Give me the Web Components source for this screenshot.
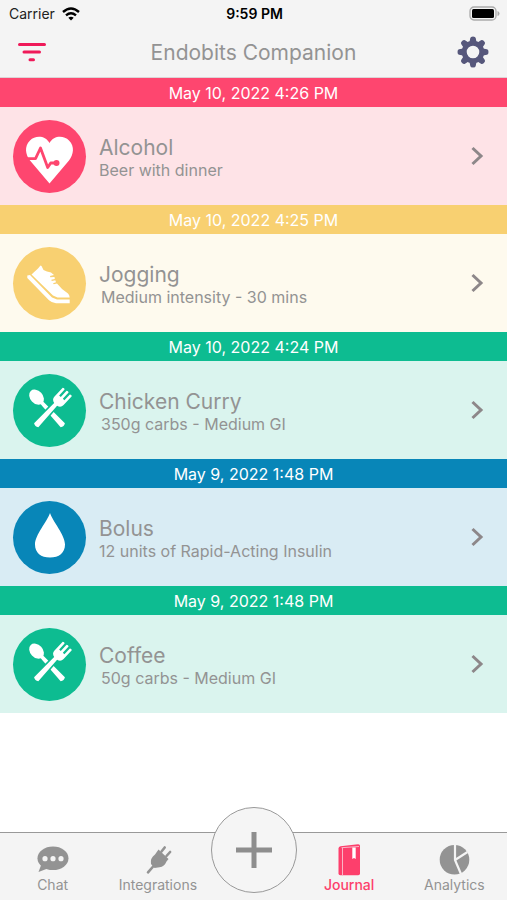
<!DOCTYPE html>
<html lang="en">
<head>
<meta charset="utf-8">
<meta name="viewport" content="width=device-width, initial-scale=1">
<title>Endobits Companion</title>
<style>
html, body { margin: 0; height: 100%; }
body { font-family: Inter, "Liberation Sans", sans-serif; color: #939393; background: #fff; }
</style>
</head>
<body>
<companion-app></companion-app>
<script>
const define = (name, html, setup) => {
  const template = document.createElement('template');
  template.innerHTML = html;
  customElements.define(name, class extends HTMLElement {
    constructor() {
      super();
      this.attachShadow({ mode: 'open' }).append(template.content.cloneNode(true));
    }
    connectedCallback() { if (setup) setup(this, this.shadowRoot); }
  });
};

const gearTeeth = [0, 45, 90, 135, 180, 225, 270, 315]
  .map(a => `<path d="M12.200 7.500 13.300 2Q13.500 .5 16 .5T18.700 2L19.800 7.500z" transform="rotate(${a} 16 16)"/>`).join('');

const cutlery = `
  <g transform="rotate(-43 36.500 37)" fill="#fff">
    <ellipse cx="36.500" cy="18" rx="6.300" ry="8.500"/>
    <path d="M34.800 24h3.400l1.200 32.500q-2.900 2-5.800 0z"/>
  </g>
  <g transform="rotate(43 36.500 37)">
    <path d="M34 26h5l1 31h-7z" fill="var(--tone)" stroke="var(--tone)" stroke-width="2"/>
    <path fill="#fff" d="M30.300 11q1.300-1.300 2.600 0v8h2.200v-8.500q1.400-1.300 2.800 0V19h2.200v-8q1.300-1.300 2.600 0v12q0 4-4.200 5l.9 28.500q-2.900 2-5.800 0L34.500 28q-4.200-1-4.200-5z"/>
  </g>`;

const entryIcons = {
  heart: `<path fill="#fff" d="M36.500 23C32 15 22 15.500 17 20.500c-6 6-4.500 14 0 20L36.500 63.500 56 40.500c4.500-6 6-14 0-20-5-5-15-5.500-19.500 2.500z"/>
    <path d="M12 38.700h10.500L27.500 28l7.200 19.500 3-4.500h5" fill="none" stroke="var(--tone)" stroke-width="2.800" stroke-linejoin="round"/>
    <circle cx="43.500" cy="43" r="3" fill="var(--tone)"/>`,
  shoe: `<g fill="#fff"><path d="M18.500 27.500 25 21.500l2.500-3 1 .5 2 4 3.500 1.500 4 1 3 2.500-4 1 .3 1.200 4.200-.3.300 2-3.500.8.500 1.200 3.500-.6.700 2-3 1 .8 1 3.200-.8Q49 43 55 46.500q1.500 1.500 1.700 4H44.500L40 48.500z"/>
    <path d="M14.300 28.500 17 28l22 22.500 5 2h12.700v3.700H43q-4-.2-7-3L14.300 31z"/></g>`,
  cutlery,
  drop: `<path fill="#fff" d="M37 12c-2.500 8-15 22-15 31.500C22 52 28 56.500 37 56.500S52 52 52 43.500C52 34 39.500 20 37 12z"/>`
};

const tabIcons = {
  chat: `<ellipse cx="16" cy="14.300" rx="15.500" ry="11.800"/><path d="M4.500 20 1.500 28 12 24z"/>
    <g fill="#f4f4f4"><circle cx="8" cy="14.700" r="2.600"/><circle cx="16" cy="14.700" r="2.600"/><circle cx="24" cy="14.700" r="2.600"/></g>`,
  plug: `<path d="M16.500 5.500 26.500 15 24.500 17.500q-2 5-7 5.800l-5 .7L9 20Q8 14 13 10.500z"/>
    <path d="M12 21.500 6 28.300M19.500 7.500 22.700 3.500M24.500 12l3.600-4" fill="none" stroke="currentColor" stroke-width="2.600" stroke-linecap="round"/>`,
  book: `<path d="M5.500 4.500Q5.500 2.500 7.500 2.200L25 .3q2-.1 2 1.500V29.500q0 1.800-1.800 1.800H7.300q-1.800 0-1.800-1.800z"/>
    <path d="M9.500 4V31.300M8.500 3.700 26 2.500" stroke="#f9b5c6" fill="none"/><path d="M19.300 3.500h3.400V15l-1.700-1-1.700 1z" fill="#fff"/>`,
  pie: `<circle cx="16.500" cy="15.700" r="14.800"/><path d="M17 0v16L23 30M17 16l12.500-8" fill="none" stroke="#f4f4f4" stroke-width="2.200"/>`
};

define('status-bar', `
<style>
  :host { display: grid; grid-template-columns: 1fr auto 1fr; align-items: center; height: 27px; padding: 0 7px 0 9px; color: #222; font-size: 14px; }
  .carrier { display: flex; align-items: center; gap: 7px; }
  time { font-size: 14px; font-weight: 600; color: #000; }
  svg { display: block; }
  .battery { justify-self: end; }
</style>
<div class="carrier"><span>Carrier</span>
  <svg width="18" height="14" viewBox="0 0 18 14" fill="none" stroke="#000" stroke-width="2.400" aria-label="Wi-Fi"><path d="M1 5Q9-2 17 5"/><path d="M4 8.300Q9 4 14 8.300"/><path d="M9 13.500 6.300 10.700Q9 8.700 11.700 10.700z" fill="#000" stroke="none"/></svg>
</div>
<time>9:59 PM</time>
<svg class="battery" width="31" height="15" viewBox="0 0 31 15" aria-label="Battery full"><rect x="1" y="1" width="26" height="13" rx="4" fill="#f4f4f4" stroke="#aaa" stroke-width="1.300"/><rect x="3" y="3" width="22" height="9" rx="1.500"/><path d="M28.500 5q2 .5 2 2.500t-2 2.500z" fill="#aaa"/></svg>`);

define('app-header', `
<style>
  :host { display: grid; grid-template-columns: 1fr auto 1fr; align-items: center; height: 50px; padding: 0 18px; border-bottom: 1px solid #dcd3d5; }
  h1 { margin: 0; padding-top: 2px; font-size: 21px; line-height: 28px; font-weight: 400; }
  button { border: 0; padding: 0; background: none; justify-self: start; }
  button:last-child { justify-self: end; }
  svg { display: block; }
</style>
<button aria-label="Filter"><svg width="28" height="32" viewBox="0 0 28 32" stroke="#ef1a59" stroke-width="3" stroke-linecap="round"><path d="M1.500 8.500h25M6 16h15.500M12 23.800h3.500"/></svg></button>
<h1><slot></slot></h1>
<button aria-label="Settings"><svg width="32" height="32" viewBox="0 0 32 32" fill="#56577b"><circle cx="16" cy="16" r="8.800" fill="none" stroke="#56577b" stroke-width="5"/>${gearTeeth}</svg></button>`);

define('journal-entry', `
<style>
  :host { display: block; }
  time { display: block; padding-top: 2px; background: var(--tone); color: #fff; text-align: center; font-size: 16px; line-height: 27px; }
  a { display: flex; align-items: center; gap: 13px; height: 98px; padding: 0 23px 0 13px; background: var(--tint); color: inherit; text-decoration: none; }
  .icon { flex: none; width: 73px; height: 73px; border-radius: 50%; background: var(--tone); }
  .icon svg { display: block; width: 100%; height: 100%; }
  .text { flex: 1; min-width: 0; padding-top: 4px; }
  h2 { margin: 0; font-size: 21px; line-height: 24px; font-weight: 400; }
  p { margin: 0; font-size: 16px; line-height: 20px; }
  :host([detailed]) p { padding-left: 2px; }
  .chevron { flex: none; }
</style>
<time></time>
<a href="#entry"><span class="icon"></span>
<div class="text"><h2><slot name="title"></slot></h2><p><slot></slot></p></div>
<svg class="chevron" width="14" height="20" viewBox="0 0 14 20" fill="none" stroke="#8d8789" stroke-width="3"><path d="M2.500 2 11 10l-8.500 8"/></svg></a>`,
(el, root) => {
  root.querySelector('time').textContent = el.getAttribute('when');
  root.querySelector('.icon').innerHTML = `<svg viewBox="0 0 73 73" aria-hidden="true">${entryIcons[el.getAttribute('icon')]}</svg>`;
});

define('tab-item', `
<style>
  :host { display: block; }
  a { display: flex; flex-direction: column; align-items: center; padding-top: 11px; color: inherit; text-decoration: none; font-size: 14px; line-height: 18px; }
  svg { display: block; fill: currentColor; }
  :host([active]) { color: #fd3f6c; }
  :host([active]) a { font-weight: 500; }
</style>
<a href="#tab"><svg width="32" height="32" viewBox="0 0 32 32" aria-hidden="true"></svg><slot></slot></a>`,
(el, root) => { root.querySelector('svg').innerHTML = tabIcons[el.getAttribute('icon')]; });

define('add-button', `
<style>
  :host { display: block; position: relative; }
  button { position: absolute; left: 0; bottom: 7px; box-sizing: border-box; width: 86px; height: 86px; padding: 0; border: 1px solid #999; border-radius: 50%; background: #f5f5f5; display: grid; place-items: center; }
</style>
<button aria-label="Add entry"><svg width="36" height="36" viewBox="0 0 36 36" stroke="#8e8e8e" stroke-width="5"><path d="M18 0v36M0 18h36"/></svg></button>`);

define('tab-bar', `
<style>
  :host { display: grid; grid-template-columns: 1fr 1fr 86px 1fr 1fr; height: 67px; border-top: 1px solid #999; background: #f4f4f4; }
</style><slot></slot>`);

define('companion-app', `
<style>
  :host { display: flex; flex-direction: column; min-height: 100%; }
  .top { background: #f4f4f4; }
  main { flex: 1; }
  .red { --tone: #fe466f; --tint: #fee3e7; }
  .yellow { --tone: #f8d071; --tint: #fefaee; }
  .green { --tone: #0dbc91; --tint: #daf4ee; }
  .blue { --tone: #0886b8; --tint: #d9ecf4; }
</style>
<div class="top"><status-bar></status-bar><app-header>Endobits Companion</app-header></div>
<main>
<journal-entry class="red" icon="heart" when="May 10, 2022 4:26 PM"><span slot="title">Alcohol</span>Beer with dinner</journal-entry>
<journal-entry class="yellow" detailed icon="shoe" when="May 10, 2022 4:25 PM"><span slot="title">Jogging</span>Medium intensity - 30 mins</journal-entry>
<journal-entry class="green" detailed icon="cutlery" when="May 10, 2022 4:24 PM"><span slot="title">Chicken Curry</span>350g carbs - Medium GI</journal-entry>
<journal-entry class="blue" icon="drop" when="May 9, 2022 1:48 PM"><span slot="title">Bolus</span>12 units of Rapid-Acting Insulin</journal-entry>
<journal-entry class="green" detailed icon="cutlery" when="May 9, 2022 1:48 PM"><span slot="title">Coffee</span>50g carbs - Medium GI</journal-entry>
</main>
<tab-bar>
<tab-item icon="chat">Chat</tab-item>
<tab-item icon="plug">Integrations</tab-item>
<add-button></add-button>
<tab-item icon="book" active>Journal</tab-item>
<tab-item icon="pie">Analytics</tab-item>
</tab-bar>`);
</script>
</body>
</html>
